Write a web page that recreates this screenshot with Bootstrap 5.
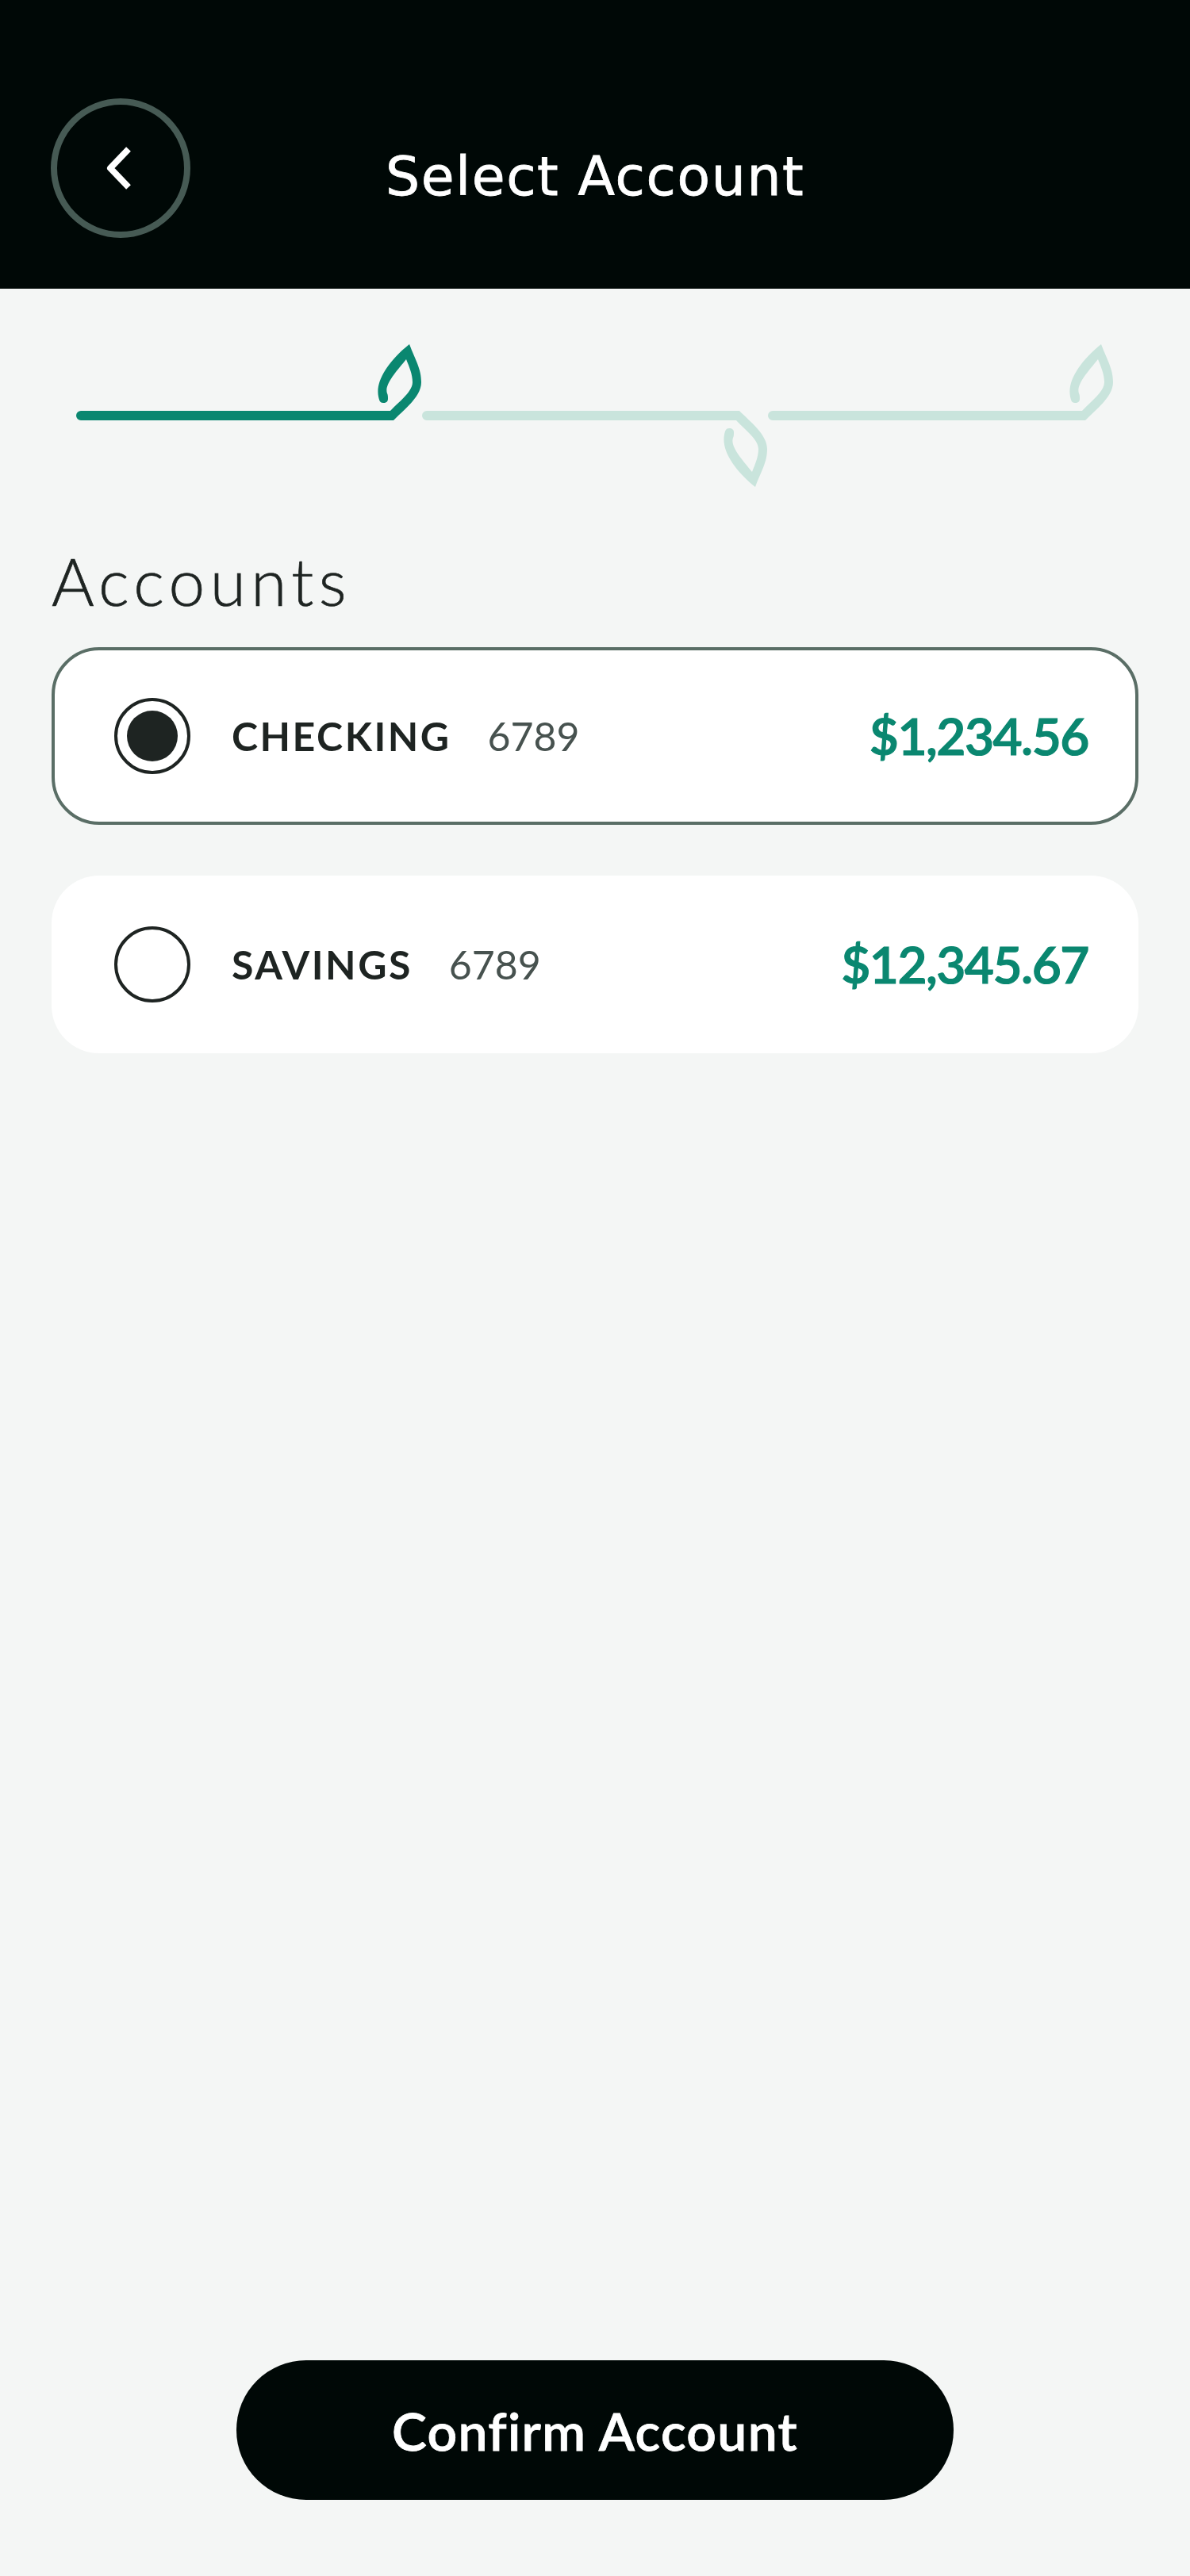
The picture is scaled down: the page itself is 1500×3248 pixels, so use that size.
<!doctype html>
<html lang="en">
<head>
<meta charset="utf-8">
<title>Select Account</title>
<link href="https://cdn.jsdelivr.net/npm/bootstrap@5.3.0/dist/css/bootstrap.min.css" rel="stylesheet">
<style>
html,body{height:100%}
body{background:#f4f6f5;font-family:"Lato","Liberation Sans",sans-serif;color:#1e2422}
.app-shell{height:3248px}
.top-bar{height:364px;background:#000806;padding:124px 0 0 64px}
.back-circle{width:176px;height:176px;border:8px solid #465a54;border-radius:50%;background:transparent;padding:0;flex:none}
.back-circle svg{width:176px;height:176px;display:block;margin:-8px}
.top-title{font-family:"DejaVu Sans",sans-serif;font-size:68px;line-height:76px;letter-spacing:1.6px;-webkit-text-stroke:.8px #fff;color:#fff;margin:61px 0 0 246px;font-weight:400;white-space:nowrap}
.step-strip{padding:70px 0 0 96px}
.step-svg{width:436px;height:180px;display:block;flex:none}
.step-on{fill:#0a8770}
.step-off{fill:#c9e4dc}
.acct-area{padding:0 65px}
.acct-heading{font-family:"Lato",sans-serif;font-weight:300;font-size:82px;line-height:100px;letter-spacing:6.4px;-webkit-text-stroke:.7px #1e2422;color:#1e2422;margin:0;padding-top:68px;height:202px}
.acct-row{height:224px;background:#fff;border-radius:60px;border:4px solid transparent;padding:0 59px 0 75px}
.acct-row+.acct-row{margin-top:64px}
.acct-picked{border-color:#5a6e66}
.radio-dot{width:96px;height:96px;border:4px solid #1e2422;border-radius:50%;flex:none;margin-right:52px;padding:12px}
.radio-fill{display:block;width:64px;height:64px;border-radius:50%;background:#1e2422}
.acct-name{font-weight:700;font-size:50px;letter-spacing:2.5px;color:#1e2422}
.acct-num{font-size:50px;letter-spacing:0;color:#47524f;margin-left:46px}
.acct-amt{font-size:64px;font-weight:600;color:#0a8770;letter-spacing:-1.5px;-webkit-text-stroke:1.2px #0a8770}
.confirm-wrap{padding-bottom:96px}
.confirm-btn{width:904px;height:176px;border-radius:88px;background:#000806;color:#fff;border:0;font-family:"Lato",sans-serif;font-weight:600;font-size:66px;letter-spacing:1.3px;-webkit-text-stroke:.8px #fff;padding:0}
.confirm-btn:hover{background:#000806;color:#fff}
</style>
</head>
<body>
<div class="app-shell d-flex flex-column">
  <header class="top-bar d-flex align-items-start">
    <button type="button" class="back-circle" aria-label="Back">
      <svg viewBox="0 0 176 176"><path d="M98 64 L75 88 L98 112" fill="none" stroke="#fff" stroke-width="8" stroke-linejoin="round"/></svg>
    </button>
    <h1 class="top-title">Select Account</h1>
  </header>

  <div class="step-strip d-flex">
    <svg class="step-svg" viewBox="96 434 436 180"><path class="step-on" d="M102 518H492C503 506 520 494 520 482C520 472 516 463 512 453C500 468 484 485 488 496C489 498 489 500 489 503C489 506 487 508 483 508C479 508 478 505 477 500C473 480 490 455 516 434C524 455 531 465 531 482C531 500 510 516 496 530H102A6 6 0 0 1 102 518Z"/></svg>
    <svg class="step-svg" viewBox="96 434 436 180"><path class="step-off" transform="matrix(1 0 0 -1 0 1048)" d="M102 518H492C503 506 520 494 520 482C520 472 516 463 512 453C500 468 484 485 488 496C489 498 489 500 489 503C489 506 487 508 483 508C479 508 478 505 477 500C473 480 490 455 516 434C524 455 531 465 531 482C531 500 510 516 496 530H102A6 6 0 0 1 102 518Z"/></svg>
    <svg class="step-svg" viewBox="96 434 436 180"><path class="step-off" d="M102 518H492C503 506 520 494 520 482C520 472 516 463 512 453C500 468 484 485 488 496C489 498 489 500 489 503C489 506 487 508 483 508C479 508 478 505 477 500C473 480 490 455 516 434C524 455 531 465 531 482C531 500 510 516 496 530H102A6 6 0 0 1 102 518Z"/></svg>
  </div>

  <main class="acct-area flex-grow-1">
    <h2 class="acct-heading">Accounts</h2>
    <div class="acct-row acct-picked d-flex align-items-center">
      <span class="radio-dot"><span class="radio-fill"></span></span>
      <span class="acct-name">CHECKING</span>
      <span class="acct-num">6789</span>
      <span class="acct-amt ms-auto">$1,234.56</span>
    </div>
    <div class="acct-row d-flex align-items-center">
      <span class="radio-dot"></span>
      <span class="acct-name">SAVINGS</span>
      <span class="acct-num">6789</span>
      <span class="acct-amt ms-auto">$12,345.67</span>
    </div>
  </main>

  <div class="confirm-wrap d-flex justify-content-center">
    <button type="button" class="btn confirm-btn">Confirm Account</button>
  </div>
</div>
<script src="https://cdn.jsdelivr.net/npm/bootstrap@5.3.0/dist/js/bootstrap.bundle.min.js"></script>
</body>
</html>
